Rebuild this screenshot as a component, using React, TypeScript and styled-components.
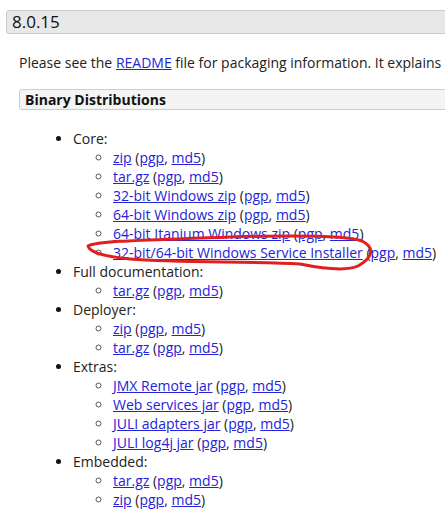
import React from "react";
import styled, { createGlobalStyle } from "styled-components";

const Global = createGlobalStyle`
  html, body {
    margin: 0;
    padding: 0;
    background: #fff;
    overflow: hidden;
  }
  body {
    font-family: "Open Sans", "DejaVu Sans", sans-serif;
    font-size: 14px;
    color: #222;
  }
`;

const Page = styled.div`
  position: relative;
  width: 520px;
  padding: 10px 0 0 6px;
`;

const VersionTitle = styled.h3`
  margin: 0;
  height: 22px;
  line-height: 22px;
  padding: 0 5px;
  font-size: 17px;
  font-weight: 400;
  color: #111;
  background: #e8e8e8;
  border: 1px solid #ccc;
  border-radius: 3px;
`;

const SectionBody = styled.div`
  padding-left: 13px;
`;

const Intro = styled.p`
  margin: 19px 0 0;
  line-height: 19px;
  white-space: nowrap;
`;

const Link = styled.a`
  color: #2323d8;
  text-decoration: underline;
`;

const SubTitle = styled.h4`
  margin: 17px 0 0;
  height: 19px;
  line-height: 19px;
  padding: 0 5px;
  font-size: 14px;
  font-weight: 700;
  color: #111;
  background: #f4f4f4;
  border: 1px solid #ccc;
  border-radius: 3px;
`;

const Groups = styled.ul`
  margin: 19px 0 0;
  padding-left: 54px;
  list-style: disc;
  line-height: 19px;
  white-space: nowrap;
`;

const Files = styled.ul`
  margin: 0;
  padding-left: 40px;
  list-style: circle;
`;

const Item = styled.li`
  &::marker {
    color: #111;
  }
`;

const FileItem = styled.li`
  &::marker {
    color: #555;
  }
`;

const Mark = styled.svg`
  position: absolute;
  left: 0;
  top: 0;
  pointer-events: none;
`;

type Group = { name: string; files: string[] };

const groups: Group[] = [
  {
    name: "Core:",
    files: [
      "zip",
      "tar.gz",
      "32-bit Windows zip",
      "64-bit Windows zip",
      "64-bit Itanium Windows zip",
      "32-bit/64-bit Windows Service Installer",
    ],
  },
  { name: "Full documentation:", files: ["tar.gz"] },
  { name: "Deployer:", files: ["zip", "tar.gz"] },
  {
    name: "Extras:",
    files: [
      "JMX Remote jar",
      "Web services jar",
      "JULI adapters jar",
      "JULI log4j jar",
    ],
  },
  { name: "Embedded:", files: ["tar.gz", "zip"] },
];

const Download = ({ label }: { label: string }) => (
  <FileItem>
    <Link href="#">{label}</Link> (<Link href="#">pgp</Link>,{" "}
    <Link href="#">md5</Link>)
  </FileItem>
);

export default function App() {
  return (
    <>
      <Global />
      <Page>
        <VersionTitle>8.0.15</VersionTitle>
        <SectionBody>
          <Intro>
            Please see the <Link href="#">README</Link> file for packaging
            information. It explains
          </Intro>
          <SubTitle>Binary Distributions</SubTitle>
          <Groups>
            {groups.map((g) => (
              <Item key={g.name}>
                {g.name}
                <Files>
                  {g.files.map((f) => (
                    <Download key={f} label={f} />
                  ))}
                </Files>
              </Item>
            ))}
          </Groups>
        </SectionBody>
        {/* hand-drawn circle around the service installer row */}
        <Mark width="445" height="513" viewBox="0 0 445 513">
          <path
            d="M 88 246 C 100 240, 160 240, 230 237 C 300 235, 350 236, 362 241 C 376 248, 372 258, 358 266 C 345 272, 320 268, 300 264 C 250 261, 180 263, 130 259 C 100 256, 90 252, 88 246 Z"
            fill="none"
            stroke="#e41e1e"
            strokeWidth="3"
            strokeLinejoin="round"
          />
        </Mark>
      </Page>
    </>
  );
}
